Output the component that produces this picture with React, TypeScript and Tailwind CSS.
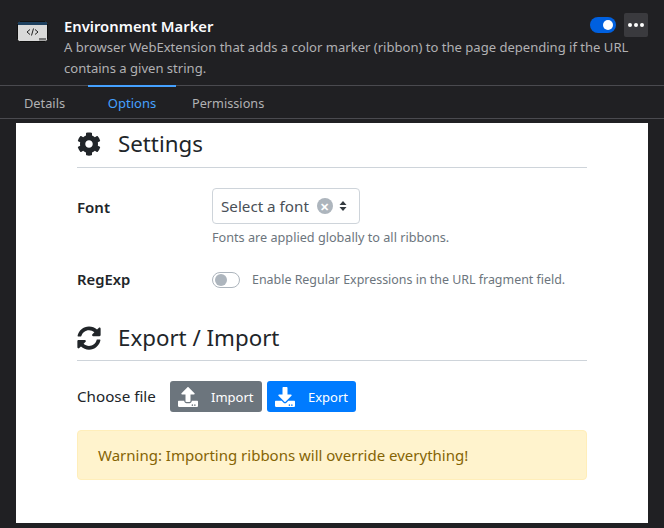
import { FaCog, FaSyncAlt, FaUpload, FaDownload } from "react-icons/fa";

const font = "font-['Noto_Sans','Open_Sans',sans-serif]";

function ExtensionIcon() {
  return (
    <svg width="32" height="22" viewBox="0 0 32 22" className="shrink-0">
      <rect x="0.5" y="0.5" width="30" height="20" rx="2" fill="#d9d9d9" stroke="#111" />
      <rect x="1" y="1" width="29" height="3" fill="#1d3f5e" />
      <rect x="22" y="17" width="7" height="2.5" fill="#777" />
      <path d="M13 8.5l-3 2.5 3 2.5M18 8.5l3 2.5-3 2.5M16.5 7.5l-2 7" fill="none" stroke="#222" strokeWidth="1" />
    </svg>
  );
}

function Header() {
  return (
    <div className="flex h-[85px] items-start pl-[17px] pr-4 pt-[13px]">
      <div className="mt-[8px] w-[47px]">
        <ExtensionIcon />
      </div>
      <div className="w-[584px]">
        <div className="flex h-6 items-center justify-between">
          <h1 className="pt-[2px] text-[14.8px] font-semibold leading-[26px] text-[#fbfbfe]">Environment Marker</h1>
          <div className="flex items-center gap-2">
            <div className="flex h-4 w-[26px] items-center justify-end rounded-full bg-[#0060df] pr-[3px]">
              <div className="h-[10px] w-[10px] rounded-full bg-white" />
            </div>
            <div className="flex h-6 w-6 items-center justify-center gap-[2px] rounded-[2px] bg-[#3a3a3e]">
              <span className="h-1 w-1 rounded-full bg-white" />
              <span className="h-1 w-1 rounded-full bg-white" />
              <span className="h-1 w-1 rounded-full bg-white" />
            </div>
          </div>
        </div>
        <p className="w-[570px] text-[13.06px] leading-[21px] text-[#b1b1b3]">
          A browser WebExtension that adds a color marker (ribbon) to the page depending if the URL contains a given string.
        </p>
      </div>
    </div>
  );
}

function Tabs() {
  return (
    <div className="flex h-[34px] border-y border-[#4a4a4f] pl-[8px] text-[13px] text-[#b1b1b3]">
      <div className="flex w-[80px] items-center justify-start pl-[16px] pt-[3px] text-[12.8px]">Details</div>
      <div className="-mt-px flex w-[88px] items-center justify-center border-t-2 border-[#45a1ff] pt-[2px] text-[#45a1ff]">Options</div>
      <div className="flex items-center pl-[16px] pt-[3px] text-[12.7px]">Permissions</div>
    </div>
  );
}

function Settings() {
  return (
    <>
      <div className="flex h-[45px] items-center gap-[17px] border-b border-[#ced4da] pb-[2px]">
        <FaCog className="h-6 w-6 text-[#212529]" />
        <h2 className="text-[22.3px] text-[#212529]">Settings</h2>
      </div>
      <div className="mt-[20px] flex">
        <label className="w-[135px] pt-[8px] text-[15px] font-semibold text-[#212529]">Font</label>
        <div>
          <div className="flex h-9 w-[148px] items-center rounded border border-[#ced4da] pl-2 text-[#495057]">
            <span className="text-[15.2px]">Select a font</span>
            <span className="ml-2 flex h-4 w-4 items-center justify-center rounded-full bg-[#adb5bd] text-[11px] font-bold leading-none text-white">✕</span>
            <svg width="8" height="12" viewBox="0 0 8 12" className="ml-[6px]">
              <path d="M4 1l3.5 4h-7zM4 11l3.5-4h-7z" fill="#343a40" />
            </svg>
          </div>
          <p className="mt-[4px] text-[12.67px] leading-[18px] text-[#6c757d]">Fonts are applied globally to all ribbons.</p>
        </div>
      </div>
      <div className="mt-[22px] flex items-center">
        <label className="w-[135px] text-[14.8px] font-semibold text-[#212529]">RegExp</label>
        <div className="mt-[2px] flex h-4 w-7 items-center rounded-full border border-[#adb5bd] pl-[2px]">
          <span className="h-3 w-3 rounded-full bg-[#adb5bd]" />
        </div>
        <span className="ml-3 mt-[3px] text-[12.43px] text-[#6c757d]">Enable Regular Expressions in the URL fragment field.</span>
      </div>
    </>
  );
}

function ExportImport() {
  return (
    <>
      <div className="mt-[27px] flex h-[44px] items-center gap-[17px] border-b border-[#ced4da] pb-[2px]">
        <FaSyncAlt className="h-6 w-6 text-[#212529]" />
        <h2 className="text-[22.3px] text-[#212529]">Export / Import</h2>
      </div>
      <div className="mt-[20px] flex items-center">
        <span className="w-[93px] text-[15.2px] text-[#212529]">Choose file</span>
        <button className="flex h-[31px] w-[92px] items-center rounded-[3px] bg-[#6c757d] pl-2 text-[13px] text-white">
          <FaUpload className="h-5 w-5" />
          <span className="ml-[13px] pt-[2px]">Import</span>
        </button>
        <button className="ml-[5px] flex h-[31px] w-[89px] items-center rounded-[3px] bg-[#007bff] pl-2 text-[13px] text-white">
          <FaDownload className="h-5 w-5" />
          <span className="ml-[13px] pt-[2px]">Export</span>
        </button>
      </div>
      <div className="mt-[18px] flex h-[50px] items-center rounded border border-[#ffeeba] bg-[#fff3cd] px-5 text-[15px] text-[#856404]">
        Warning: Importing ribbons will override everything!
      </div>
    </>
  );
}

export default function App() {
  return (
    <div className={`h-[528px] w-[664px] overflow-hidden bg-[#202023] ${font}`}>
      <Header />
      <Tabs />
      <div className="mx-4 mt-[4px] h-[400px] bg-white px-[61px]">
        <Settings />
        <ExportImport />
      </div>
    </div>
  );
}
